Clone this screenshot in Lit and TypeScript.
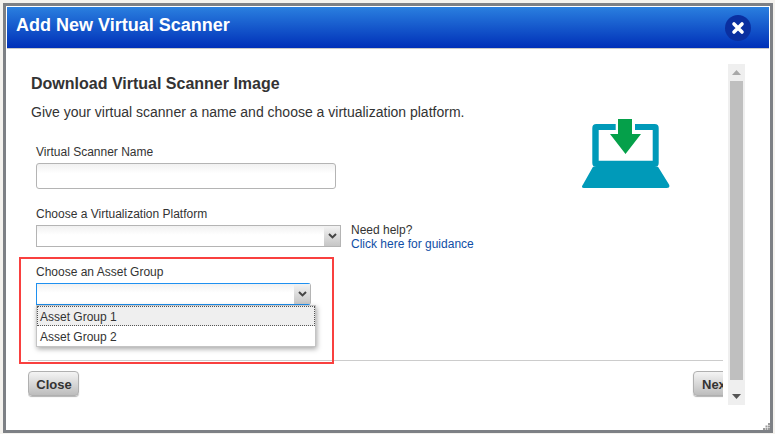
import { LitElement, html, css } from "lit";
import { customElement } from "lit/decorators.js";

const chevron = html`<svg width="9" height="6" viewBox="0 0 9 6"><path d="M1 1 L4.5 4.4 L8 1" fill="none" stroke="#444" stroke-width="2"/></svg>`;

@customElement("app-root")
export class AppRoot extends LitElement {
  static styles = css`
    :host { display: block; width: 775px; height: 434px; background: #f4f2ee; font-family: "Liberation Sans", Arial, sans-serif; color: #333; overflow: hidden; }
    .shell { box-sizing: border-box; margin: 3px 0 0 3px; width: 770px; height: 430px; border: 3px solid #7d8085; background: #fff; padding: 1px; display: flex; flex-direction: column; position: relative; }
    .head { height: 42px; flex: none; background: linear-gradient(#2a7fdf, #0030b8); border-bottom: 1px solid #c9c9c9; display: flex; align-items: center; justify-content: space-between; padding: 0 18px 5px 9px; box-sizing: border-box; }
    .title { color: #fff; font-size: 18px; font-weight: 700; }
    .x { width: 26px; height: 26px; border-radius: 50%; background: #0a2fa0; display: flex; align-items: center; justify-content: center; margin-top: 6px; }
    .body { flex: 1; position: relative; display: flex; overflow: hidden; }
    .main { width: 716px; flex: none; display: flex; flex-direction: column; padding-left: 24px; box-sizing: border-box; }
    h2 { margin: 26px 0 0; font-size: 16px; font-weight: 700; line-height: 18px; color: #333; }
    .sub { margin: 11px 0 0; font-size: 14px; line-height: 16px; color: #333; }
    .form { padding-left: 5px; }
    label { display: block; font-size: 12px; line-height: 14px; color: #333; }
    .input { box-sizing: border-box; width: 300px; height: 26px; border: 1px solid #b4b4b4; border-radius: 3px; background: linear-gradient(#f1f1f1, #fff 40%); margin-top: 4px; }
    .selectrow { display: flex; align-items: flex-start; gap: 10px; margin-top: 4px; }
    .select { box-sizing: border-box; width: 305px; height: 22px; border: 1px solid #b4b4b4; background: linear-gradient(#f1f1f1, #fff 45%); display: flex; justify-content: flex-end; }
    .arrow { width: 16px; height: 20px; background: linear-gradient(#f2f2f2, #c6c6c6); display: flex; align-items: center; justify-content: center; }
    .help { font-size: 12px; line-height: 14px; color: #333; margin-top: -2px; }
    .help a { color: #0f4ea5; display: block; text-decoration: none; }
    .f1 { margin-top: 25px; }
    .f2 { margin-top: 18px; }
    .f3 { margin-top: 14px; }
    .f3 .select { width: 275px; border-color: #1e90f0 #b4b4b4 #1e90f0 #1e90f0; border-radius: 0 3px 3px 0; margin-top: 4px; }
    .menu { box-sizing: border-box; width: 280px; height: 42px; background: #fff; border: 1px solid #c4c4c4; box-shadow: 1px 2px 5px rgba(0,0,0,.35); position: relative; z-index: 1; }
    .opt { height: 20px; font-size: 12px; line-height: 22px; padding-left: 3px; color: #333; box-sizing: border-box; }
    .opt.on { background: #efefef; outline: 1px dotted #555; outline-offset: -1px; }
    .rule { border-top: 1px solid #ccc; margin: 13px 0 0 -3px; width: 695px; }
    .foot { display: flex; justify-content: space-between; margin: 10px 0 0 -3px; width: 695px; overflow: hidden; height: 30px; }
    .btn { box-sizing: border-box; height: 25px; width: 51px; border: 1px solid #b0b0b0; border-radius: 4px; background: linear-gradient(#f4f4f4, #bdbdbd); box-shadow: 0 1px 1px rgba(0,0,0,.3); font-size: 13px; font-weight: 700; color: #333; line-height: 23px; text-align: center; font-family: inherit; padding: 1px 0 0 1px; }
    .btn.next { margin-right: -21px; flex: none; text-align: left; padding-left: 8px; }
    .lap { position: absolute; left: 575px; top: 69px; }
    .scroll { position: absolute; left: 721px; top: 15px; width: 17px; height: 341px; background: #efefef; display: flex; flex-direction: column; align-items: center; }
    .cap { height: 17px; flex: none; display: flex; align-items: center; justify-content: center; }
    .thumb { flex: 1; width: 13px; background: #bfbfbf; margin-bottom: 8px; }
    .redbox { position: absolute; left: 12px; top: 208px; width: 315px; height: 107px; border: 2px solid #f9403f; box-sizing: border-box; pointer-events: none; }
    .grip { position: absolute; right: 0; bottom: 0; }
  `;

  render() {
    return html`
      <div class="shell">
        <div class="head">
          <div class="title">Add New Virtual Scanner</div>
          <div class="x"><svg width="14" height="14" viewBox="0 0 14 14"><path d="M3 3 L11 11 M11 3 L3 11" stroke="#fff" stroke-width="3.6" stroke-linecap="round"/></svg></div>
        </div>
        <div class="body">
          <div class="main">
            <h2>Download Virtual Scanner Image</h2>
            <p class="sub">Give your virtual scanner a name and choose a virtualization platform.</p>
            <div class="form">
              <div class="f1"><label>Virtual Scanner Name</label><div class="input"></div></div>
              <div class="f2"><label>Choose a Virtualization Platform</label>
                <div class="selectrow"><div class="select"><div class="arrow">${chevron}</div></div>
                  <div class="help">Need help?<a>Click here for guidance</a></div></div>
              </div>
              <div class="f3"><label>Choose an Asset Group</label>
                <div class="select"><div class="arrow">${chevron}</div></div>
                <div class="menu"><div class="opt on">Asset Group 1</div><div class="opt">Asset Group 2</div></div>
              </div>
            </div>
            <div class="rule"></div>
            <div class="foot"><button class="btn">Close</button><button class="btn next">Next</button></div>
          </div>
          <svg class="lap" width="88" height="71" viewBox="0 0 88 71">
            <path d="M14.300 6 H33.700 V12 H16.700 V42.700 H70.700 V12 H53 V6 H72.700 Q76.700 6 76.700 10 V45 Q76.700 49 72.700 49 H14.300 Q10.300 49 10.300 45 V10 Q10.300 6 14.300 6Z" fill="#009ab9"/>
            <path d="M11 48.700 H76 L87 66.500 Q88.500 70 85 70 H2 Q-1.500 70 1 66.500Z" fill="#009ab9"/>
            <path d="M36 1 H50 V16 H59 L43.500 36 L28 16 H36Z" fill="#05a04a"/>
          </svg>
          <div class="scroll">
            <div class="cap"><svg width="9" height="5"><path d="M0 5 L4.500 0 L9 5Z" fill="#a8a8a8"/></svg></div>
            <div class="thumb"></div>
            <div class="cap"><svg width="9" height="5"><path d="M0 0 L4.500 5 L9 0Z" fill="#555"/></svg></div>
          </div>
          <div class="redbox"></div>
        </div>
        <svg class="grip" width="7" height="7"><path d="M5 0h2v2H5zM2.500 2.500h2v2h-2zM5 2.500h2v2H5zM0 5h2v2H0zM2.500 5h2v2h-2zM5 5h2v2H5z" fill="#9a9a9a"/></svg>
      </div>
    `;
  }
}
